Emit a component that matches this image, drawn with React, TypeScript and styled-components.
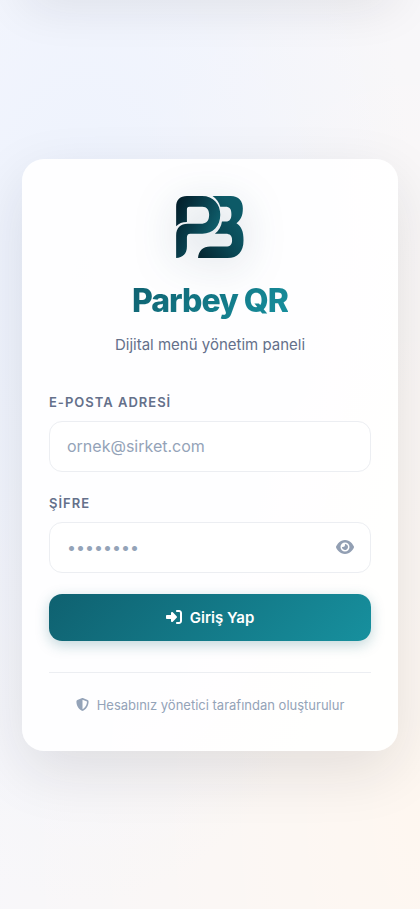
import React, { useState } from "react";
import styled, { createGlobalStyle } from "styled-components";
import { FaEye, FaRightToBracket, FaShieldHalved } from "react-icons/fa6";

const GlobalStyle = createGlobalStyle`
  *, *::before, *::after { box-sizing: border-box; }
  body { margin: 0; }
  body, input, button { font-family: Inter, "Liberation Sans", sans-serif; }
`;

const Page = styled.main`
  position: relative;
  overflow: hidden;
  min-height: 100vh;
  display: flex;
  align-items: center;
  justify-content: center;
  padding: 22px;
  background:
    radial-gradient(ellipse at 20% 30%, rgba(234, 241, 255, 0.8), transparent 70%),
    radial-gradient(ellipse at 100% 90%, rgba(255, 247, 239, 0.9), transparent 80%),
    #f7f7fb;
`;

const TopShade = styled.div`
  position: absolute;
  top: -40px;
  left: 22px;
  right: 22px;
  height: 40px;
  border-radius: 22px;
  box-shadow: 0 4px 50px rgba(30, 30, 40, 0.11);
`;

const Card = styled.section`
  position: relative;
  width: 100%;
  max-width: 440px;
  padding: 37px 27px 36px;
  border-radius: 22px;
  background: rgba(255, 255, 255, 0.9);
  box-shadow: 0 20px 60px rgba(30, 30, 40, 0.11);
`;

const Header = styled.header`
  display: flex;
  flex-direction: column;
  align-items: center;
  margin-bottom: 35px;
`;

const Logo = styled.svg`
  display: block;
  width: 68px;
  height: 62px;
  margin-bottom: 23px;
  filter: drop-shadow(0 8px 20px rgba(15, 60, 90, 0.18));
`;

const Title = styled.h1`
  margin: 0 0 12px;
  font-size: 32px;
  line-height: 40px;
  font-weight: 800;
  letter-spacing: -1px;
  color: transparent;
  background: linear-gradient(135deg, #0f6170, #17909e);
  background-clip: text;
`;

const Subtitle = styled.p`
  margin: 0;
  font-size: 15px;
  line-height: 24px;
  color: #64708a;
`;

const Field = styled.div`
  margin-bottom: 21px;
`;

const Label = styled.label`
  display: block;
  margin-bottom: 9px;
  font-size: 13px;
  line-height: 20px;
  font-weight: 600;
  letter-spacing: 1px;
  color: #64708a;
`;

const InputWrap = styled.div`
  display: flex;
  align-items: center;
  height: 51px;
  padding: 0 16px 0 17px;
  border: 1px solid #eceef2;
  border-radius: 13px;
  background: #fff;
`;

const Input = styled.input`
  flex: 1;
  min-width: 0;
  height: 100%;
  padding: 0;
  border: 0;
  outline: 0;
  background: transparent;
  font-size: 16px;
  color: #1e293b;
  &::placeholder { color: #94a3b8; opacity: 1; }
`;

const EyeButton = styled.button`
  display: flex;
  padding: 0;
  border: 0;
  background: none;
  color: #929fb3;
  font-size: 18px;
  cursor: pointer;
`;

const Submit = styled.button`
  display: flex;
  align-items: center;
  justify-content: center;
  gap: 8px;
  width: 100%;
  height: 47px;
  border: 0;
  border-radius: 13px;
  background: linear-gradient(135deg, #0f6170, #17909e);
  box-shadow: 0 4px 14px rgba(15, 97, 112, 0.26);
  color: #fff;
  font-size: 15px;
  font-weight: 600;
  cursor: pointer;
  svg { font-size: 16px; }
`;

const Footer = styled.footer`
  display: flex;
  align-items: center;
  justify-content: center;
  gap: 8px;
  margin-top: 31px;
  padding-top: 22px;
  border-top: 1px solid #eceef2;
  font-size: 13px;
  line-height: 20px;
  color: #94a3b8;
`;

function BrandMark() {
  return (
    <Logo viewBox="50 48 201 184" role="img" aria-label="Parbey" overflow="visible">
      <defs>
        <linearGradient id="letterP" gradientUnits="userSpaceOnUse" x1="50" y1="70" x2="182" y2="130">
          <stop offset="0" stopColor="#031e2a" />
          <stop offset="0.5" stopColor="#083d4b" />
          <stop offset="1" stopColor="#0f606d" />
        </linearGradient>
        <linearGradient id="letterB" gradientUnits="userSpaceOnUse" x1="120" y1="220" x2="250" y2="130">
          <stop offset="0" stopColor="#052833" />
          <stop offset="0.55" stopColor="#0a4855" />
          <stop offset="1" stopColor="#0d5a67" />
        </linearGradient>
      </defs>
      <path
        fill="url(#letterB)"
        d="M158 48H212C236 48 248 63 248 85C248 107 242 118 229 129C244 139 250 153 250 179C250 214 232 232 203 232H115C116 211 130 198 151 198H197C211 198 216 191 216 179C216 166 210 160 197 160H165C177 151 184 139 186 124H197C210 123 214 116 214 102C214 87 209 80 196 80H181C177 66 170 56 158 48Z"
      />
      <path
        fill="url(#letterP)"
        d="M50 138V80C50 59 62 48 82 48H127C161 48 181 72 181 104C181 138 159 160 128 160H92C85 160 82 164 82 171V198C82 219 70 231 50 232V165C50 142 63 130 84 130H128C142 130 148 119 148 104C148 89 141 80 128 80H90C84 80 82 83 82 88V125C68 125 58 129 50 138Z"
      />
    </Logo>
  );
}

export default function App() {
  const [visible, setVisible] = useState(false);
  return (
    <>
      <GlobalStyle />
      <Page lang="tr">
        <TopShade />
        <Card>
          <Header>
            <BrandMark />
            <Title>Parbey QR</Title>
            <Subtitle>Dijital menü yönetim paneli</Subtitle>
          </Header>
          <form onSubmit={(e) => e.preventDefault()}>
            <Field>
              <Label htmlFor="email">E-POSTA ADRESİ</Label>
              <InputWrap>
                <Input id="email" type="email" placeholder="ornek@sirket.com" />
              </InputWrap>
            </Field>
            <Field>
              <Label htmlFor="password">ŞİFRE</Label>
              <InputWrap>
                <Input id="password" type={visible ? "text" : "password"} placeholder="••••••••" />
                <EyeButton type="button" aria-label="Şifreyi göster" onClick={() => setVisible(!visible)}>
                  <FaEye />
                </EyeButton>
              </InputWrap>
            </Field>
            <Submit type="submit">
              <FaRightToBracket />
              Giriş Yap
            </Submit>
          </form>
          <Footer>
            <FaShieldHalved />
            <span>Hesabınız yönetici tarafından oluşturulur</span>
          </Footer>
        </Card>
      </Page>
    </>
  );
}
